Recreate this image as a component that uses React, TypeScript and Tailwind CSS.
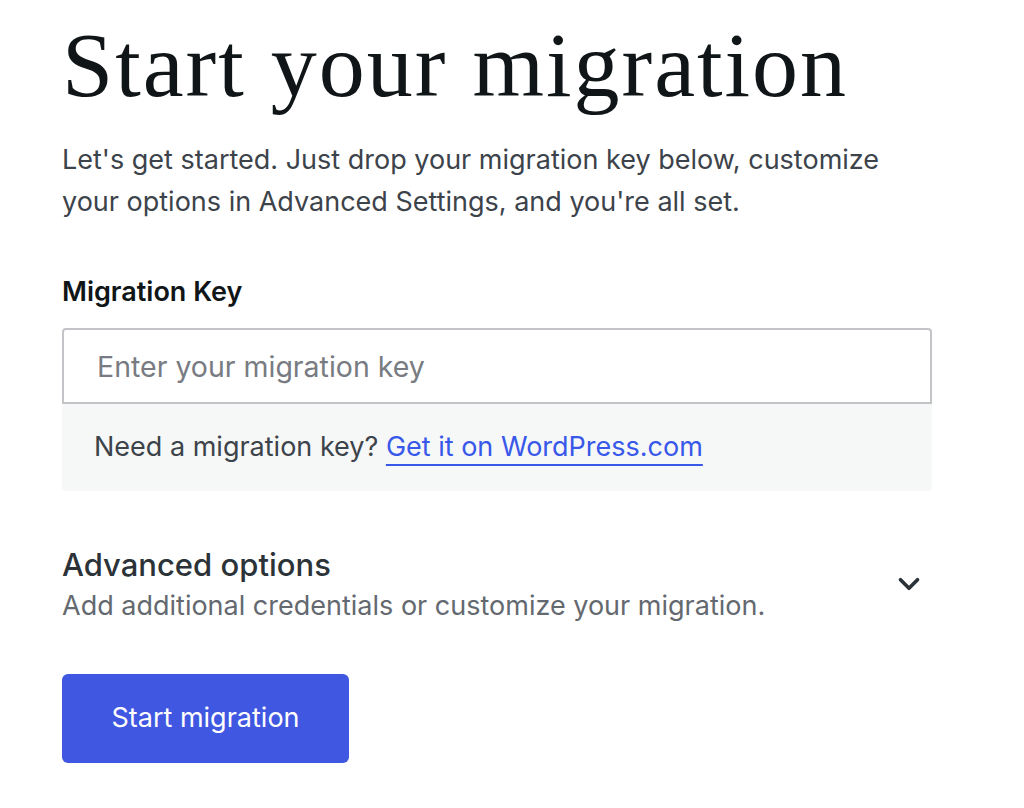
import { ChevronDown } from 'lucide-react'

const sans = 'font-["Inter","Noto_Sans",sans-serif]'

export default function App() {
  return (
    <div className={`min-h-[808px] bg-white ${sans}`}>
      <div className="w-[870px] ml-[62px] pt-[15px]">
        <h1 className="font-['Liberation_Serif',serif] text-[92px] leading-[100px] tracking-[2px] text-[#101517]">
          Start your migration
        </h1>
        <p className="mt-[24px] text-[27px] leading-[42px] text-[#3c434a] pr-[30px]">
          Let's get started. Just drop your migration key below, customize your options in
          Advanced Settings, and you're all set.
        </p>

        <label className="block mt-[53px] text-[27px] leading-[32px] font-semibold text-[#101517]">
          Migration Key
        </label>
        <div className="mt-[20px]">
          <input
            type="text"
            placeholder="Enter your migration key"
            className="w-full h-[76px] px-[33px] text-[28.5px] border-2 border-[#c3c4c7] rounded-t-[4px] outline-none placeholder:text-[#787c82] text-[#101517]"
          />
          <div className="h-[87px] flex items-center px-[32px] bg-[#f6f7f7] rounded-b-[4px] text-[27px] text-[#3c434a]">
            <span>Need a migration key?&nbsp;</span>
            <a href="#" className="text-[#3858e9] underline decoration-2 underline-offset-[8px]">
              Get it on WordPress.com
            </a>
          </div>
        </div>

        <div className="mt-[54px] flex items-center justify-between">
          <div>
            <h2 className="text-[31px] leading-[40px] font-medium text-[#2c3338]">Advanced options</h2>
            <p className="mt-[4px] text-[27px] leading-[34px] text-[#646970]">
              Add additional credentials or customize your migration.
            </p>
          </div>
          <ChevronDown className="w-[34px] h-[34px] mr-[6px] text-[#2c3338]" strokeWidth={2.6} />
        </div>

        <button className="mt-[51px] w-[287px] h-[89px] rounded-[6px] bg-[#3f57e1] text-white text-[27px]">
          Start migration
        </button>
      </div>
    </div>
  )
}
